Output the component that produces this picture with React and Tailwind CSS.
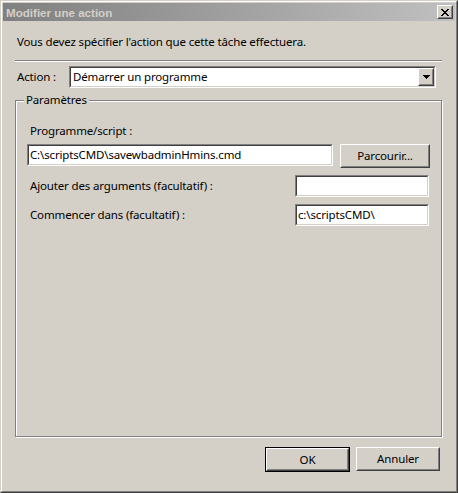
import React from "react";

const font = { fontFamily: '"Noto Sans", "Open Sans", sans-serif' };

function Sunken({ className = "", children }) {
  return (
    <div className={"border border-t-[#808080] border-l-[#808080] border-r-white border-b-white " + className}>
      <div className="h-full w-full border border-t-[#404040] border-l-[#404040] border-r-[#d4d0c8] border-b-[#d4d0c8] bg-white flex items-center">
        {children}
      </div>
    </div>
  );
}

function Raised({ className = "", children }) {
  return (
    <div className={"border border-t-white border-l-white border-r-[#404040] border-b-[#404040] bg-[#d4d0c8] " + className}>
      <div className="h-full w-full border border-t-[#d4d0c8] border-l-[#d4d0c8] border-r-[#808080] border-b-[#808080] flex items-center justify-center">
        {children}
      </div>
    </div>
  );
}

export default function App() {
  return (
    <div className="w-[458px] h-[493px] bg-[#d4d0c8] text-black text-[11.5px] tracking-[-0.15px] leading-[16px]" style={font}>
      <div className="w-full h-full border border-t-[#d4d0c8] border-l-[#d4d0c8] border-r-[#404040] border-b-[#404040]">
        <div className="w-full h-full border border-t-white border-l-white border-r-[#808080] border-b-[#808080] p-px flex flex-col">
          {/* Title bar */}
          <div className="h-[18px] shrink-0 flex items-center justify-between bg-gradient-to-r from-[#808080] to-[#c0c0c0] pl-[3px] pr-[2px]">
            <span className="text-[#d4d0c8] font-bold text-[11.6px] leading-[13px] tracking-normal" style={{ fontFamily: '"Liberation Sans", Arial, sans-serif' }}>
              Modifier une action
            </span>
            <Raised className="w-[16px] h-[14px]">
              <svg width="8" height="7" viewBox="0 0 8 7" shapeRendering="crispEdges">
                <path d="M0 0h2v1H0zM6 0h2v1H6zM1 1h2v1H1zM5 1h2v1H5zM2 2h4v1H2zM3 3h2v1H3zM2 4h4v1H2zM1 5h2v1H1zM5 5h2v1H5zM0 6h2v1H0zM6 6h2v1H6z" fill="#000" />
              </svg>
            </Raised>
          </div>

          {/* Client */}
          <div className="flex-1 flex flex-col">
            <div className="pl-[14px] mt-[13px]">Vous devez spécifier l'action que cette tâche effectuera.</div>
            <div className="ml-[12px] mr-[13px] mt-[10px] h-[2px] border-t border-t-[#808080] border-b border-b-white" />

            <div className="flex items-center mt-[4px] pl-[14px]">
              <span className="w-[52px]">Action :</span>
              <Sunken className="w-[367px] h-[22px]">
                <div className="flex-1 pl-[2px] flex items-center h-full">
                  <span className="bg-white">Démarrer un programme</span>
                </div>
                <Raised className="w-[16px] h-[18px]">
                  <svg width="7" height="4" viewBox="0 0 7 4" shapeRendering="crispEdges">
                    <path d="M0 0h7v1H0zM1 1h5v1H1zM2 2h3v1H2zM3 3h1v1H3z" fill="#000" />
                  </svg>
                </Raised>
              </Sunken>
            </div>

            {/* Group box */}
            <div className="relative ml-[12px] mt-[12px] w-[427px] h-[337px] border border-[#808080] shadow-[inset_1px_1px_0_#fff,1px_1px_0_#fff] pl-[11px] pt-[22px]">
              <span className="absolute left-[8px] top-[-9px] px-[2px] bg-[#d4d0c8]">Paramètres</span>
              <div className="pl-[3px]">Programme/script :</div>
              <div className="flex items-start mt-[5px] gap-[7px]">
                <Sunken className="w-[306px] h-[22px]">
                  <span className="pl-[1px]">C:\scriptsCMD\savewbadminHmins.cmd</span>
                </Sunken>
                <Raised className="w-[90px] h-[24px]">
                  <span>Parcourir...</span>
                </Raised>
              </div>
              <div className="flex items-center justify-between mt-[7px] w-[402px]">
                <span className="pl-[3px]">Ajouter des arguments (facultatif) :</span>
                <Sunken className="w-[134px] h-[22px]" />
              </div>
              <div className="flex items-center justify-between mt-[7px] w-[402px]">
                <span className="pl-[3px]">Commencer dans (facultatif) :</span>
                <Sunken className="w-[134px] h-[22px]">
                  <span className="pl-[1px]">c:\scriptsCMD\</span>
                </Sunken>
              </div>
            </div>

            {/* Buttons */}
            <div className="flex justify-end gap-[6px] mt-[10px] mr-[15px]">
              <div className="border border-black">
                <Raised className="w-[83px] h-[23px]">
                  <span>OK</span>
                </Raised>
              </div>
              <Raised className="w-[84px] h-[24px]">
                <span>Annuler</span>
              </Raised>
            </div>
          </div>
        </div>
      </div>
    </div>
  );
}
